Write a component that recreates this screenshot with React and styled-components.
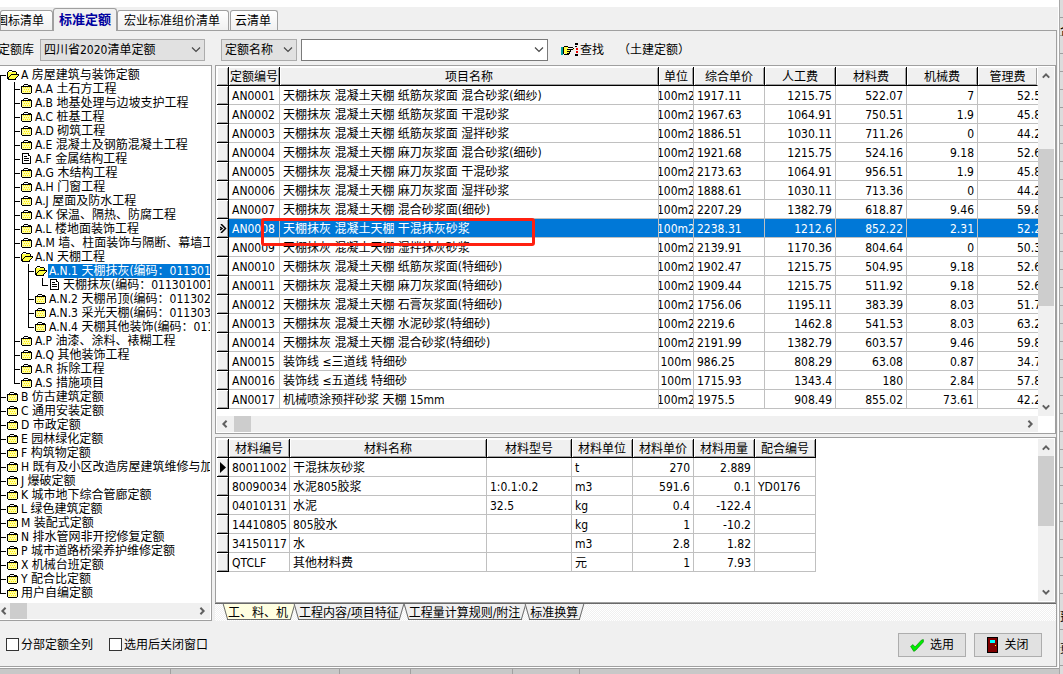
import React, { useState } from "react";
import styled, { createGlobalStyle, css } from "styled-components";

const GlobalStyle = createGlobalStyle`
  * {
    box-sizing: border-box;
  }

  body {
    margin: 0;
    overflow: hidden;
    background: #f0f0f0;
  }

  body,
  button,
  input,
  select {
    font-family: "DejaVu Sans Condensed", "Noto Sans", "Noto Sans CJK SC", sans-serif;
    font-size: 12px;
    line-height: 14px;
    color: #000;
  }
`;

const Desktop = styled.div`
  display: grid;
  grid-template-columns: minmax(0, 1fr) 4px;
  grid-template-rows: 1fr 6px;
  min-height: 100vh;
`;

const Dialog = styled.div`
  display: flex;
  flex-direction: column;
  min-width: 0;
  background: #f0f0f0;
  border-top: 7px solid #fff;
  border-right: 1px solid #fff;
  border-bottom: 1px solid #fff;
`;

const SideSliver = styled.div`
  grid-row: span 2;
  overflow: hidden;
  padding-top: 24px;
  border-left: 1px solid #a8a8a8;
  background: repeating-linear-gradient(#dcdcdc 0 17px, #a0a0a0 17px 18px);
  white-space: nowrap;
`;

const SliverText = styled.div`
  height: ${({ $height }) => $height}px;
`;

const BottomSliver = styled.div`
  display: flex;
  overflow: hidden;
  border-top: 1px solid #a0a0a0;
  background: #c8c8c8;
`;

const SliverCell = styled.div`
  flex: none;
  width: ${({ $width }) => $width}px;
  border-right: 1px solid #a0a0a0;
`;

const TabBar = styled.div`
  display: flex;
  align-items: flex-end;
  height: 23px;
`;

const Tab = styled.button`
  display: flex;
  justify-content: flex-end;
  align-items: center;
  height: 20px;
  padding: 0 8px 0 6px;
  margin-right: 1px;
  overflow: hidden;
  white-space: nowrap;
  border: 1px solid #a0a0a0;
  border-bottom: 0;
  border-radius: 3px 3px 0 0;
  background: linear-gradient(#fff, #f0f0f0);

  &:first-child {
    width: 53px;
    margin-right: 0;
  }

  &:last-child {
    padding: 0 6px 0 4px;
  }

  ${({ $active }) =>
    $active &&
    css`
      position: relative;
      justify-content: center;
      width: 64px;
      height: 23px;
      padding: 0;
      margin-right: 0;
      margin-bottom: -1px;
      color: #0000a0;
      font-size: 13px;
      font-weight: bold;
      background: #f0f0f0;
    `}
`;

const Body = styled.div`
  display: flex;
  flex: 1;
  flex-direction: column;
  margin-right: 1px;
  border: solid #a0a0a0;
  border-width: 1px 1px 1px 0;
`;

const Toolbar = styled.div`
  display: flex;
  align-items: center;
  height: 34px;
  padding-top: 4px;
  white-space: nowrap;
`;

const LibraryLabel = styled.label`
  width: 40px;
  padding-right: 6px;
  display: flex;
  justify-content: flex-end;
`;

const Picker = styled.span`
  position: relative;
  width: ${({ $width }) => $width}px;
  margin-right: ${({ $after }) => $after}px;
  height: 22px;

  select,
  input {
    width: 100%;
    height: 22px;
    padding: 0 4px 0 3px;
    appearance: none;
    border: 1px solid #acacac;
    border-radius: 0;
    background: #e1e1e1;
  }

  input {
    border-color: #7a7a7a;
    background: #fff;
  }

  svg {
    position: absolute;
    top: 8px;
    right: 4px;
    pointer-events: none;
  }
`;

const FindButton = styled.button`
  display: flex;
  align-items: center;
  gap: 2px;
  padding: 0;
  margin-right: 14px;
  border: 0;
  background: none;
`;

const Content = styled.div`
  display: grid;
  grid-template-columns: 212px minmax(0, 1fr);
  gap: 3px;
`;

const TreePanel = styled.div`
  display: flex;
  flex-direction: column;
  padding: 2px 1px 1px 0;
  border: solid #a0a0a0;
  border-width: 1px 1px 1px 0;
  background: #fff;
`;

const Tree = styled.ul`
  flex: 1;
  margin: 0 0 3px;
  padding: 0;
  list-style: none;
  overflow: hidden;
`;

const TreeRow = styled.li`
  display: flex;
  height: 14px;
  white-space: nowrap;

  svg {
    flex: none;
    margin-top: 1px;
  }
`;

const line = "linear-gradient(#000, #000)";

// one guide cell per ancestor, the last one carries the branch to the icon
const Guide = styled.span`
  flex: none;
  width: ${({ $kind }) => ($kind === "pass" ? 14 : 7)}px;
  height: 14px;
  background-repeat: no-repeat;
  ${({ $kind }) =>
    ({
      pass: css`
        background-image: ${line};
        background-size: 1px 14px;
      `,
      tee: css`
        background-image: ${line}, ${line};
        background-size: 1px 14px, 6px 1px;
        background-position: 0 0, 0 7px;
      `,
      top: css`
        background-image: ${line}, ${line};
        background-size: 1px 7px, 6px 1px;
        background-position: 0 7px, 0 7px;
      `,
      end: css`
        background-image: ${line}, ${line};
        background-size: 1px 8px, 6px 1px;
        background-position: 0 0, 0 7px;
      `,
    })[$kind]}
`;

const TreeText = styled.span`
  flex: 1;
  height: 14px;
  padding-left: 1px;
  overflow: hidden;
  ${({ $selected }) =>
    $selected &&
    css`
      color: #fff;
      background: #0078d7;
    `}
`;

const Workspace = styled.div`
  display: flex;
  flex-direction: column;
  min-width: 0;
`;

const Panel = styled.div`
  display: flex;
  flex-direction: column;
  flex: ${({ $fill }) => ($fill ? 1 : "none")};
  padding: 1px;
  border: 1px solid #a0a0a0;
  background: #fff;
  margin-bottom: ${({ $fill }) => ($fill ? 0 : 3)}px;
`;

const GridView = styled.div`
  position: relative;
  display: flex;
  flex: 1;
  justify-content: space-between;
`;

const DataTable = styled.table`
  width: ${({ $fit }) => ($fit ? "599px" : "100%")};
  min-width: 0;
  align-self: flex-start;
  table-layout: fixed;
  border-spacing: 0;
  margin-bottom: 7px;
`;

const Head = styled.th`
  height: 19px;
  padding: 1px 0 0;
  overflow: hidden;
  font-weight: normal;
  white-space: nowrap;
  background: #f0f0f0;
  border-right: 1px solid #000;
  border-bottom: 1px solid #000;
  box-shadow: inset 1px 1px #fff, inset -1px -1px #a0a0a0;

  &:last-child {
    border-right-color: ${({ $cut }) => ($cut ? "#fff" : "#000")};
  }
`;

const Cell = styled.td`
  height: 19px;
  padding: 2px 3px 0;
  overflow: hidden;
  white-space: nowrap;
  text-align: ${({ $align }) => $align || "left"};
  border-right: 1px solid #c0c0c0;
  border-bottom: 1px solid #c0c0c0;

  ${({ $cut }) =>
    $cut &&
    css`
      padding: 2px 0 0 39px;
      border-right: 0;
      text-overflow: clip;
    `}
`;

const UnitCell = styled(Cell)`
  padding: 2px 0 0;

  span {
    display: flex;
    justify-content: center;
  }
`;

const Row = styled.tr`
  ${({ $selected }) =>
    $selected &&
    css`
      color: #fff;
      background: #0078d7;
    `}
`;

const Indicator = styled.td`
  height: 19px;
  padding: 0;
  background: #f0f0f0;
  border-right: 1px solid #000;
  border-bottom: 1px solid #000;
  box-shadow: inset 1px 1px #fff, inset -1px -1px #a0a0a0;

  svg {
    display: block;
    margin-left: 3px;
  }
`;

const Marker = styled.div`
  position: absolute;
  top: 151px;
  left: 44px;
  width: 274px;
  height: 28px;
  border: 3px solid #ff2010;
  border-radius: 3px;
  pointer-events: none;
`;

const Scroll = styled.div`
  display: flex;
  flex: none;
  flex-direction: ${({ $vertical }) => ($vertical ? "column" : "row")};
  justify-content: space-between;
  align-items: center;
  background: #f0f0f0;
  color: #606060;
  ${({ $vertical }) =>
    $vertical
      ? css`
          width: 16px;
          padding: 5px 0;
        `
      : css`
          height: 16px;
          padding: 0 4px 0 ${({ $flush }) => ($flush ? 0 : 4)}px;
          margin-right: ${({ $flush }) => ($flush ? 0 : 16)}px;
        `}
`;

const Track = styled.div`
  flex: 1;
  align-self: stretch;
  display: flex;
  flex-direction: ${({ $vertical }) => ($vertical ? "column" : "row")};

  &::before {
    content: "";
    flex: 0 0 ${({ $offset }) => $offset}px;
  }

  &::after {
    content: "";
    flex: 0 0 ${({ $size }) => $size}px;
    background: #cdcdcd;
  }
`;

const SheetBar = styled.div`
  display: flex;
  height: 18px;
  padding-left: 10px;
  border-top: 1px solid #696969;
  background: repeating-conic-gradient(#fff 0 25%, #f0f0f0 0 50%) 0 0 / 2px 2px;
`;

const Sheet = styled.button`
  position: relative;
  z-index: 0;
  height: 16px;
  padding: 1px 6px 0 3px;
  margin-right: 1px;
  border: 0;
  white-space: nowrap;
  background: none;

  &::before,
  &::after {
    content: "";
    position: absolute;
    z-index: -1;
    top: 0;
    bottom: 0;
    border-bottom: 1px solid #696969;
    background: ${({ $active }) => ($active ? "#ffffe1" : "#f0f0f0")};
  }

  &::before {
    left: 0;
    right: 40%;
    border-left: 1px solid #696969;
    transform: skewX(16deg);
  }

  &::after {
    left: 40%;
    right: 2px;
    border-right: 1px solid #696969;
    transform: skewX(-16deg);
  }

  &:first-child {
    padding-right: 7px;
  }
`;

const Footer = styled.div`
  display: flex;
  flex: 1;
  align-items: center;
  padding: 2px 14px 0 6px;
`;

const Check = styled.label`
  display: flex;
  align-items: center;
  gap: 2px;
  margin-right: 16px;

  input {
    width: 13px;
    height: 13px;
    margin: 0;
    appearance: none;
    border: 1px solid #333;
    background: #fff;
  }

  input:checked {
    background: #0078d7;
  }
`;

const Actions = styled.div`
  display: flex;
  gap: 8px;
  margin-left: auto;
`;

const ActionButton = styled.button`
  display: flex;
  align-items: center;
  justify-content: center;
  gap: 6px;
  width: 68px;
  height: 24px;
  padding: 1px 0 0;
  border: 1px solid #adadad;
  background: #e1e1e1;
`;

const Chevron = () => (
  <svg width="10" height="6" viewBox="0 0 10 6" fill="none" stroke="#484848" strokeWidth="1.2" aria-hidden="true">
    <path d="M1 .5 5 4.5 9 .5" />
  </svg>
);

const turns = { up: 0, right: 90, down: 180, left: 270 };

const Arrow = ({ to }) => (
  <svg width="8" height="8" viewBox="0 0 8 8" fill="none" stroke="currentColor" strokeWidth="2">
    <path d="M.8 5.6 4 2.4 7.2 5.6" transform={`rotate(${turns[to]} 4 4)`} />
  </svg>
);

const ScrollBar = ({ vertical, offset, size, flush }) => (
  <Scroll $vertical={vertical} $flush={flush} aria-hidden="true">
    <Arrow to={vertical ? "up" : "left"} />
    <Track $vertical={vertical} $offset={offset} $size={size} />
    <Arrow to={vertical ? "down" : "right"} />
  </Scroll>
);

const icons = {
  folder: (
    <>
      <path d="M1 3h9v7H1z" fill="#ffffa0" />
      <path d="M2 4h1v1H2zM4 4h1v1H4zM6 4h1v1H6zM8 4h1v1H8zM3 6h1v1H3zM5 6h1v1H5zM7 6h1v1H7zM2 8h1v1H2zM4 8h1v1H4zM6 8h1v1H6zM8 8h1v1H8z" fill="#ffe800" />
      <path d="M3 1h4v1H3zM2 2h1v1H2zM7 2h3v1H7zM1 3h9v1H1zM0 3h1v7H0zM10 3h1v7h-1zM1 10h9v1H1z" fill="#000" />
    </>
  ),
  open: (
    <>
      <path d="M1 3h8v3h2L8 10H1z" fill="#ffff40" />
      <path d="M2 1h3v1H2zM1 2h1v1H1zM5 2h4v1H5zM0 3h1v7H0zM9 3h1v2H9zM4 5h8v1H4zM3 6h1v1H3zM11 6h1v1h-1zM2 7h1v1H2zM10 7h1v1h-1zM1 8h1v2H1zM9 8h1v1H9zM1 10h8v1H1zM8 9h1v1H8z" fill="#000" />
    </>
  ),
  file: (
    <>
      <path d="M1 0h6l3 3v8H1z" fill="#fff" />
      <path d="M1 0h6v1H1zM1 1h1v10H1zM1 10h9v1H1zM9 3h1v7H9zM7 0h1v3H7zM8 2h1v1H8zM3 3h3v1H3zM3 5h5v1H3zM3 7h5v1H3z" fill="#000" />
    </>
  ),
};

const NodeIcon = ({ name }) => (
  <svg width="13" height="12" viewBox="0 0 13 12" shapeRendering="crispEdges" aria-hidden="true">
    {icons[name]}
  </svg>
);

const HandIcon = () => (
  <svg width="17" height="14" viewBox="0 0 17 14" shapeRendering="crispEdges" aria-hidden="true">
    <path d="M0 4h2v8H0z" fill="#00a0a0" />
    <path d="M3 4h4v2h6v1H9v4H4L3 10z" fill="#ffff40" />
    <path d="M2 4h1v7H2zM3 3h4v1H3zM7 4h5v1H7zM12 5h1v1h-1zM6 6h6v1H6zM9 7h1v1H9zM6 8h4v1H6zM8 9h1v1H8zM6 10h3v1H6zM3 11h5v1H3z" fill="#000" />
    <path d="M14 0h3v2h-3zM14 3h2v1h-2zM14 11h3v2h-3z" fill="#000" />
    <path d="M15 5h2v2h-2zM15 8h2v2h-2z" fill="#f00000" />
  </svg>
);

const CheckIcon = () => (
  <svg width="14" height="13" viewBox="0 0 14 13" aria-hidden="true">
    <path d="M.6 7.4 3 5.6 5 8 11.5 1 13.4.6 13.4 3 6 11 3.8 12.4z" fill="#00f000" stroke="#008000" strokeWidth=".6" />
  </svg>
);

const DoorIcon = () => (
  <svg width="11" height="16" viewBox="0 0 11 16" shapeRendering="crispEdges" aria-hidden="true">
    <path d="M0 0h11v16H0z" />
    <path d="M1 1h9v14H1z" fill="#800000" />
    <path d="M3 3h5v3H3z" fill="#00ffff" />
    <path d="M8 8h1v1H8z" fill="#ffff00" />
  </svg>
);

// [guides, icon, text]: p = pass, t = tee, f = first, e = end
const nodes = [
  ["f", "open", "A 房屋建筑与装饰定额"],
  ["pt", "folder", "A.A 土石方工程"],
  ["pt", "folder", "A.B 地基处理与边坡支护工程"],
  ["pt", "folder", "A.C 桩基工程"],
  ["pt", "folder", "A.D 砌筑工程"],
  ["pt", "folder", "A.E 混凝土及钢筋混凝土工程"],
  ["pt", "file", "A.F 金属结构工程"],
  ["pt", "folder", "A.G 木结构工程"],
  ["pt", "folder", "A.H 门窗工程"],
  ["pt", "folder", "A.J 屋面及防水工程"],
  ["pt", "folder", "A.K 保温、隔热、防腐工程"],
  ["pt", "folder", "A.L 楼地面装饰工程"],
  ["pt", "folder", "A.M 墙、柱面装饰与隔断、幕墙工程"],
  ["pt", "open", "A.N 天棚工程"],
  ["ppt", "open", "A.N.1 天棚抹灰(编码：011301)"],
  ["pppe", "file", "天棚抹灰(编码：011301001)"],
  ["ppt", "folder", "A.N.2 天棚吊顶(编码：011302)"],
  ["ppt", "folder", "A.N.3 采光天棚(编码：011303)"],
  ["ppe", "folder", "A.N.4 天棚其他装饰(编码：011304)"],
  ["pt", "folder", "A.P 油漆、涂料、裱糊工程"],
  ["pt", "folder", "A.Q 其他装饰工程"],
  ["pt", "folder", "A.R 拆除工程"],
  ["pe", "folder", "A.S 措施项目"],
  ["t", "folder", "B 仿古建筑定额"],
  ["t", "folder", "C 通用安装定额"],
  ["t", "folder", "D 市政定额"],
  ["t", "folder", "E 园林绿化定额"],
  ["t", "folder", "F 构筑物定额"],
  ["t", "folder", "H 既有及小区改造房屋建筑维修与加固"],
  ["t", "folder", "J 爆破定额"],
  ["t", "folder", "K 城市地下综合管廊定额"],
  ["t", "folder", "L 绿色建筑定额"],
  ["t", "folder", "M 装配式定额"],
  ["t", "folder", "N 排水管网非开挖修复定额"],
  ["t", "folder", "P 城市道路桥梁养护维修定额"],
  ["t", "folder", "X 机械台班定额"],
  ["t", "folder", "Y 配合比定额"],
  ["e", "folder", "用户自编定额"],
];

const guideKinds = { p: "pass", t: "tee", f: "top", e: "end" };

const quotas = [
  ["AN0001", "天棚抹灰 混凝土天棚 纸筋灰浆面 混合砂浆(细纱)", "100m2", "1917.11", "1215.75", "522.07", "7", "52.5"],
  ["AN0002", "天棚抹灰 混凝土天棚 纸筋灰浆面 干混砂浆", "100m2", "1967.63", "1064.91", "750.51", "1.9", "45.8"],
  ["AN0003", "天棚抹灰 混凝土天棚 纸筋灰浆面 湿拌砂浆", "100m2", "1886.51", "1030.11", "711.26", "0", "44.2"],
  ["AN0004", "天棚抹灰 混凝土天棚 麻刀灰浆面 混合砂浆(细砂)", "100m2", "1921.68", "1215.75", "524.16", "9.18", "52.6"],
  ["AN0005", "天棚抹灰 混凝土天棚 麻刀灰浆面 干混砂浆", "100m2", "2173.63", "1064.91", "956.51", "1.9", "45.8"],
  ["AN0006", "天棚抹灰 混凝土天棚 麻刀灰浆面 湿拌砂浆", "100m2", "1888.61", "1030.11", "713.36", "0", "44.2"],
  ["AN0007", "天棚抹灰 混凝土天棚 混合砂浆面(细砂)", "100m2", "2207.29", "1382.79", "618.87", "9.46", "59.8"],
  ["AN0008", "天棚抹灰 混凝土天棚 干混抹灰砂浆", "100m2", "2238.31", "1212.6", "852.22", "2.31", "52.2"],
  ["AN0009", "天棚抹灰 混凝土天棚 湿拌抹灰砂浆", "100m2", "2139.91", "1170.36", "804.64", "0", "50.3"],
  ["AN0010", "天棚抹灰 混凝土天棚 纸筋灰浆面(特细砂)", "100m2", "1902.47", "1215.75", "504.95", "9.18", "52.6"],
  ["AN0011", "天棚抹灰 混凝土天棚 麻刀灰浆面(特细砂)", "100m2", "1909.44", "1215.75", "511.92", "9.18", "52.6"],
  ["AN0012", "天棚抹灰 混凝土天棚 石膏灰浆面(特细砂)", "100m2", "1756.06", "1195.11", "383.39", "8.03", "51.7"],
  ["AN0013", "天棚抹灰 混凝土天棚 水泥砂浆(特细砂)", "100m2", "2219.6", "1462.8", "541.53", "8.03", "63.2"],
  ["AN0014", "天棚抹灰 混凝土天棚 混合砂浆(特细砂)", "100m2", "2191.99", "1382.79", "603.57", "9.46", "59.8"],
  ["AN0015", "装饰线 ≤三道线 特细砂", "100m", "986.25", "808.29", "63.08", "0.87", "34.7"],
  ["AN0016", "装饰线 ≤五道线 特细砂", "100m", "1715.93", "1343.4", "180", "2.84", "57.8"],
  ["AN0017", "机械喷涂预拌砂浆 天棚 15mm", "100m2", "1975.5", "908.49", "855.02", "73.61", "42.2"],
];

const materials = [
  ["80011002", "干混抹灰砂浆", "", "t", "270", "2.889", ""],
  ["80090034", "水泥805胶浆", "1:0.1:0.2", "m3", "591.6", "0.1", "YD0176"],
  ["04010131", "水泥", "32.5", "kg", "0.4", "-122.4", ""],
  ["14410805", "805胶水", "", "kg", "1", "-10.2", ""],
  ["34150117", "水", "", "m3", "2.8", "1.82", ""],
  ["QTCLF", "其他材料费", "", "元", "1", "7.93", ""],
];

const quotaHeads = ["定额编号", "项目名称", "单位", "综合单价", "人工费", "材料费", "机械费", "管理费"];
const materialHeads = ["材料编号", "材料名称", "材料型号", "材料单位", "材料单价", "材料用量", "配合编号"];
const tabs = ["国标清单", "标准定额", "宏业标准组价清单", "云清单"];
const sheets = ["工、料、机", "工程内容/项目特征", "工程量计算规则/附注", "标准换算"];
const sliverWidths = [171, 169, 71, 102, 67];

const Columns = ({ widths }) => (
  <colgroup>
    {widths.map((width, i) => (
      <col key={i} width={width} />
    ))}
  </colgroup>
);

const QuotaTable = ({ selected, onSelect }) => (
  <DataTable>
    <Columns widths={[12, 51, undefined, 35, 71, 71, 71, 71, 60]} />
    <thead>
      <tr>
        <Head />
        {quotaHeads.map((head) => (
          <Head key={head} $cut>
            {head}
          </Head>
        ))}
      </tr>
    </thead>
    <tbody>
      {quotas.map(([code, name, unit, price, labour, material, machine, manage]) => (
        <Row key={code} $selected={code === selected} onClick={() => onSelect(code)}>
          <Indicator>
            {code === selected && (
              <svg width="7" height="9" viewBox="0 0 7 9" fill="none" stroke="#000" strokeWidth="1.5">
                <path d="M1 0 5.5 4.5 1 9M0 3 2 4.5 0 6" />
              </svg>
            )}
          </Indicator>
          <Cell>{code}</Cell>
          <Cell>{name}</Cell>
          <UnitCell>
            <span>{unit}</span>
          </UnitCell>
          <Cell>{price}</Cell>
          <Cell $align="right">{labour}</Cell>
          <Cell $align="right">{material}</Cell>
          <Cell $align="right">{machine}</Cell>
          <Cell $cut>{manage}</Cell>
        </Row>
      ))}
    </tbody>
  </DataTable>
);

const MaterialTable = () => (
  <DataTable $fit>
    <Columns widths={[12, 61, 197, 85, 61, 61, 61, 61]} />
    <thead>
      <tr>
        <Head />
        {materialHeads.map((head) => (
          <Head key={head}>{head}</Head>
        ))}
      </tr>
    </thead>
    <tbody>
      {materials.map((row, i) => (
        <Row key={row[0]}>
          <Indicator>
            {i === 0 && (
              <svg width="7" height="11" viewBox="0 0 7 11">
                <path d="M0 0 6 5.5 0 11z" />
              </svg>
            )}
          </Indicator>
          {row.map((value, col) => (
            <Cell key={col} $align={col === 4 || col === 5 ? "right" : "left"}>
              {value}
            </Cell>
          ))}
        </Row>
      ))}
    </tbody>
  </DataTable>
);

const App = () => {
  const [tab, setTab] = useState("标准定额");
  const [sheet, setSheet] = useState(sheets[0]);
  const [quota, setQuota] = useState("AN0008");
  const [node, setNode] = useState(14);

  return (
    <Desktop>
      <GlobalStyle />
      <Dialog>
        <TabBar role="tablist">
          {tabs.map((name) => (
            <Tab key={name} role="tab" aria-selected={name === tab} $active={name === tab} onClick={() => setTab(name)}>
              {name}
            </Tab>
          ))}
        </TabBar>
        <Body>
          <Toolbar>
            <LibraryLabel htmlFor="library">定额库</LibraryLabel>
            <Picker $width={165} $after={16}>
              <select id="library">
                <option>四川省2020清单定额</option>
              </select>
              <Chevron />
            </Picker>
            <Picker $width={76} $after={4}>
              <select aria-label="查找字段">
                <option>定额名称</option>
              </select>
              <Chevron />
            </Picker>
            <Picker $width={247} $after={13}>
              <input type="text" aria-label="查找内容" />
              <Chevron />
            </Picker>
            <FindButton>
              <HandIcon />
              查找
            </FindButton>
            <span>（土建定额）</span>
          </Toolbar>
          <Content>
            <TreePanel>
              <Tree role="tree">
                {nodes.map(([guides, icon, text], i) => (
                  <TreeRow key={text} role="treeitem" aria-selected={i === node} onClick={() => setNode(i)}>
                    {guides.split("").map((guide, g) => (
                      <Guide key={g} $kind={guideKinds[guide]} />
                    ))}
                    <NodeIcon name={icon} />
                    <TreeText $selected={i === node}>{text}</TreeText>
                  </TreeRow>
                ))}
              </Tree>
              <ScrollBar flush offset={2} size={17} />
            </TreePanel>
            <Workspace>
              <Panel>
                <GridView>
                  <QuotaTable selected={quota} onSelect={setQuota} />
                  <ScrollBar vertical offset={69} size={157} />
                  <Marker />
                </GridView>
                <ScrollBar offset={5} size={17} />
              </Panel>
              <Panel $fill>
                <GridView>
                  <MaterialTable />
                  <ScrollBar vertical offset={4} size={70} />
                </GridView>
              </Panel>
              <SheetBar role="tablist">
                {sheets.map((name) => (
                  <Sheet key={name} role="tab" aria-selected={name === sheet} $active={name === sheet} onClick={() => setSheet(name)}>
                    {name}
                  </Sheet>
                ))}
              </SheetBar>
            </Workspace>
          </Content>
          <Footer>
            <Check>
              <input type="checkbox" />
              分部定额全列
            </Check>
            <Check>
              <input type="checkbox" />
              选用后关闭窗口
            </Check>
            <Actions>
              <ActionButton>
                <CheckIcon />
                选用
              </ActionButton>
              <ActionButton>
                <DoorIcon />
                关闭
              </ActionButton>
            </Actions>
          </Footer>
        </Body>
      </Dialog>
      <SideSliver aria-hidden="true">
        <SliverText $height={586}>合</SliverText>
        <SliverText $height={32}>费</SliverText>
        <SliverText $height={28}>页</SliverText>
      </SideSliver>
      <BottomSliver>
        {sliverWidths.map((width) => (
          <SliverCell key={width} $width={width} />
        ))}
      </BottomSliver>
    </Desktop>
  );
};

export default App;
